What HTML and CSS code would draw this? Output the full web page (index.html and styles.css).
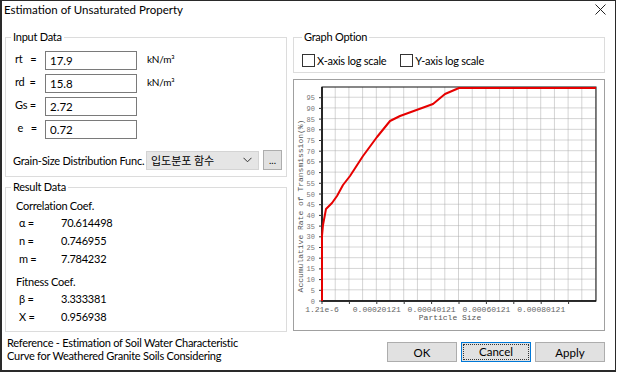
FILE: index.html
```html
<!DOCTYPE html>
<html lang="en">

<head>
	<title>Estimation of Unsaturated Property</title>
	<meta charset="utf-8">
	<link rel="stylesheet" href="styles.css">
</head>

<body>
	<div class="window">
		<div class="titlebar">
			<span class="title">Estimation of Unsaturated Property</span>
			<svg class="close" width="11" height="11" viewBox="0 0 11 11">
				<path d="M0.5 0.5 L10.5 10.5 M10.5 0.5 L0.5 10.5" stroke="#222" stroke-width="1" fill="none"/>
			</svg>
		</div>

		<div class="main">
			<div class="col-left">
				<fieldset class="group input-group">
					<legend>Input Data</legend>
					<div class="params">
						<span class="lbl">rt&nbsp;&nbsp;&nbsp;=</span><input class="field" value="17.9"><span class="unit">kN/m³</span>
						<span class="lbl">rd&nbsp;&nbsp;=</span><input class="field" value="15.8"><span class="unit">kN/m³</span>
						<span class="lbl">Gs =</span><input class="field" value="2.72"><span class="unit"></span>
						<span class="lbl">&nbsp;e&nbsp;&nbsp;&nbsp;=</span><input class="field" value="0.72"><span class="unit"></span>
					</div>
					<div class="func-row">
						<span class="func-lbl">Grain-Size Distribution Func.</span>
						<div class="combo">
							<span class="combo-text">입도분포 함수</span>
							<svg width="9" height="6" viewBox="0 0 9 6"><path d="M0.5 0.8 L4.5 4.8 L8.5 0.8" stroke="#333" fill="none"/></svg>
						</div>
						<button class="dots">...</button>
					</div>
				</fieldset>

				<fieldset class="group result-group">
					<legend>Result Data</legend>
					<div class="sub">Correlation Coef.</div>
					<div class="coef"><span class="sym">α =</span><span>70.614498</span></div>
					<div class="coef"><span class="sym">n =</span><span>0.746955</span></div>
					<div class="coef"><span class="sym">m =</span><span>7.784232</span></div>
					<div class="sub fit">Fitness Coef.</div>
					<div class="coef"><span class="sym">β =</span><span>3.333381</span></div>
					<div class="coef"><span class="sym">X =</span><span>0.956938</span></div>
				</fieldset>
			</div>

			<div class="col-right">
				<fieldset class="group graph-group">
					<legend>Graph Option</legend>
					<div class="checks">
						<label class="check"><span class="box"></span>X-axis log scale</label>
						<label class="check"><span class="box"></span>Y-axis log scale</label>
					</div>
				</fieldset>

				<div class="chart">
					<svg width="310" height="250" viewBox="0 0 310 250">
						<defs>
							<pattern id="grid" x="28" y="7" width="13.7" height="10.7" patternUnits="userSpaceOnUse">
								<path d="M13.7 0 V10.7 M0 10.7 H13.7" stroke="#a9a9a9" stroke-width="1" fill="none"/>
							</pattern>
						</defs>
						<rect x="28" y="7" width="274" height="214" fill="url(#grid)"/>
						<rect x="28" y="7" width="274" height="214" fill="none" stroke="#111" stroke-width="1"/>
						<path d="M28 7 V221 H302" stroke="#111" stroke-width="1.6" fill="none"/>

						<!-- y ticks -->
						<path d="M25 221 H28 M25 210.3 H28 M25 199.6 H28 M25 188.9 H28 M25 178.2 H28 M25 167.5 H28 M25 156.8 H28 M25 146.1 H28 M25 135.4 H28 M25 124.7 H28 M25 114 H28 M25 103.3 H28 M25 92.6 H28 M25 81.9 H28 M25 71.2 H28 M25 60.5 H28 M25 49.8 H28 M25 39.1 H28 M25 28.4 H28 M25 17.7 H28" stroke="#333" stroke-width="1"/>
						<!-- x ticks -->
						<path d="M28 221 V224 M55.4 221 V224 M82.8 221 V224 M110.2 221 V224 M137.6 221 V224 M165 221 V224 M192.4 221 V224 M219.8 221 V224 M247.2 221 V224 M274.6 221 V224" stroke="#333" stroke-width="1"/>

						<g class="ylab">
							<text x="21" y="223.5">0</text>
							<text x="21" y="212.8">5</text>
							<text x="21" y="202.1">10</text>
							<text x="21" y="191.4">15</text>
							<text x="21" y="180.7">20</text>
							<text x="21" y="170">25</text>
							<text x="21" y="159.3">30</text>
							<text x="21" y="148.6">35</text>
							<text x="21" y="137.9">40</text>
							<text x="21" y="127.2">45</text>
							<text x="21" y="116.5">50</text>
							<text x="21" y="105.8">55</text>
							<text x="21" y="95.1">60</text>
							<text x="21" y="84.4">65</text>
							<text x="21" y="73.7">70</text>
							<text x="21" y="63">75</text>
							<text x="21" y="52.3">80</text>
							<text x="21" y="41.6">85</text>
							<text x="21" y="30.9">90</text>
							<text x="21" y="20.2">95</text>
						</g>
						<g class="xlab">
							<text x="28" y="232">1.21e-6</text>
							<text x="82.8" y="232">0.00020121</text>
							<text x="137.6" y="232">0.00040121</text>
							<text x="192.4" y="232">0.00060121</text>
							<text x="247.2" y="232">0.00080121</text>
						</g>
						<text class="axis-title" x="156" y="239.5">Particle Size</text>
						<text class="axis-title" transform="translate(9 126) rotate(-90)">Accumulative Rate of Transmission(%)</text>

						<polyline points="28,221 28,156 29,145 32,129 38,123 43,116 49,105 56,96 69,76 83,57 96,41 106,36 139,24 151,14 165,8 302,8" fill="none" stroke="#e60000" stroke-width="2" stroke-linejoin="round"/>
					</svg>
				</div>
			</div>
		</div>

		<div class="footer">
			<p class="ref">Reference - Estimation of Soil Water Characteristic<br>Curve for Weathered Granite Soils Considering</p>
			<div class="buttons">
				<button class="btn">OK</button>
				<button class="btn focus"><span>Cancel</span></button>
				<button class="btn">Apply</button>
			</div>
		</div>
	</div>
</body>

</html>
```

FILE: styles.css
```css
html, body {
	margin: 0;
	padding: 0;
	background-color: white;
}

body {
	font-family: Lato, "Noto Sans CJK KR", sans-serif;
	font-size: 11px;
	letter-spacing: -0.25px;
	color: black;
}

.window {
	box-sizing: border-box;
	width: 616px;
	height: 372px;
	border-style: solid;
	border-color: #2a2a2a;
	border-width: 1px 1px 2px 2px;
	display: flex;
	flex-direction: column;
}

/* title */
.titlebar {
	height: 28px;
	display: flex;
	justify-content: space-between;
	align-items: flex-start;
	padding: 0 9px 0 2px;
}

.title {
	font-size: 11.5px;
	letter-spacing: 0;
	line-height: 18px;
}

.close {
	margin-top: 3px;
}

/* layout */
.main {
	display: flex;
	gap: 6px;
	padding-left: 3px;
	height: 303px;
}

.col-left {
	width: 282px;
	display: flex;
	flex-direction: column;
	gap: 2px;
}

.col-right {
	width: 312px;
	display: flex;
	flex-direction: column;
	gap: 6px;
}

/* group boxes */
.group {
	margin: 0;
	border: 1px solid #dcdcdc;
	min-width: 0;
}

.group legend {
	padding: 0 2px;
	line-height: 16px;
}

.input-group {
	padding: 6px 4px 6px 9px;
}

.input-group legend {
	margin-left: -4px;
}

.params {
	display: grid;
	grid-template-columns: 30px 92px auto;
	row-gap: 4px;
	align-items: center;
}

.lbl {
	white-space: nowrap;
	margin-top: -4px;
}

.field {
	box-sizing: border-box;
	height: 19px;
	width: 92px;
	border: 1px solid #7a7a7a;
	font-family: Lato, sans-serif;
	font-size: 11.5px;
	padding: 0 4px;
	margin: 0;
}

.unit {
	font-size: 10px;
	margin: -3px 0 0 10px;
}

.func-row {
	display: flex;
	align-items: center;
	margin-top: 11px;
	margin-left: -2px;
}

.func-lbl {
	width: 133px;
	white-space: nowrap;
}

.combo {
	box-sizing: border-box;
	width: 113px;
	height: 19px;
	background-color: #e5e5e5;
	border: 1px solid #d4d4d4;
	display: flex;
	align-items: center;
	justify-content: space-between;
	padding: 0 6px 0 4px;
}

.combo-text {
	font-family: "Noto Sans CJK KR", sans-serif;
	font-size: 11px;
	letter-spacing: 0;
}

.dots {
	box-sizing: border-box;
	width: 19px;
	height: 20px;
	margin-left: 4px;
	padding: 0;
	background-color: #e1e1e1;
	border: 1px solid #adadad;
	font-family: Lato, sans-serif;
	font-size: 10px;
	line-height: 14px;
}

.result-group {
	padding: 3px 4px 5px 10px;
	flex: 1;
}

.result-group legend {
	margin-left: -5px;
}

.sub {
	line-height: 16px;
}

.sub.fit {
	margin-top: 6px;
}

.coef {
	display: flex;
	line-height: 18px;
	padding-left: 3px;
}

.sym {
	width: 42px;
}

/* graph option */
.graph-group {
	padding: 7px 4px 4px 8px;
}

.graph-group legend {
	margin-left: 0;
}

.checks {
	display: flex;
	gap: 14px;
	height: 16px;
	align-items: center;
}

.check {
	display: flex;
	align-items: center;
	gap: 2px;
}

.box {
	box-sizing: border-box;
	width: 13px;
	height: 13px;
	border: 1px solid #333;
	background-color: white;
}

.chart {
	box-sizing: border-box;
	height: 252px;
	border: 1px solid #a0a0a0;
	background-color: white;
}

.chart svg {
	display: block;
}

.chart text {
	letter-spacing: 0;
}

.ylab text {
	font-family: "Liberation Mono", monospace;
	font-size: 7px;
	fill: #777;
	text-anchor: end;
}

.xlab text {
	font-family: "Liberation Mono", monospace;
	font-size: 8px;
	fill: #666;
	text-anchor: middle;
}

.axis-title {
	font-family: "Liberation Mono", monospace;
	font-size: 8px;
	fill: #555;
	text-anchor: middle;
}

/* footer */
.footer {
	display: flex;
	justify-content: space-between;
	padding: 0 10px 0 5px;
}

.ref {
	margin: 4px 0 0 0;
	line-height: 13px;
}

.buttons {
	display: flex;
	gap: 4px;
	margin-top: 10px;
}

.btn {
	box-sizing: border-box;
	width: 70px;
	height: 20px;
	padding: 0;
	background-color: #e1e1e1;
	border: 1px solid #adadad;
	font-family: Lato, sans-serif;
	font-size: 11.5px;
	color: black;
}

.btn.focus {
	border: 1px solid #0078d7;
	padding: 1px;
}

.btn.focus span {
	display: block;
	height: 100%;
	box-sizing: border-box;
	border: 1px dotted #333;
	line-height: 14px;
}
```
